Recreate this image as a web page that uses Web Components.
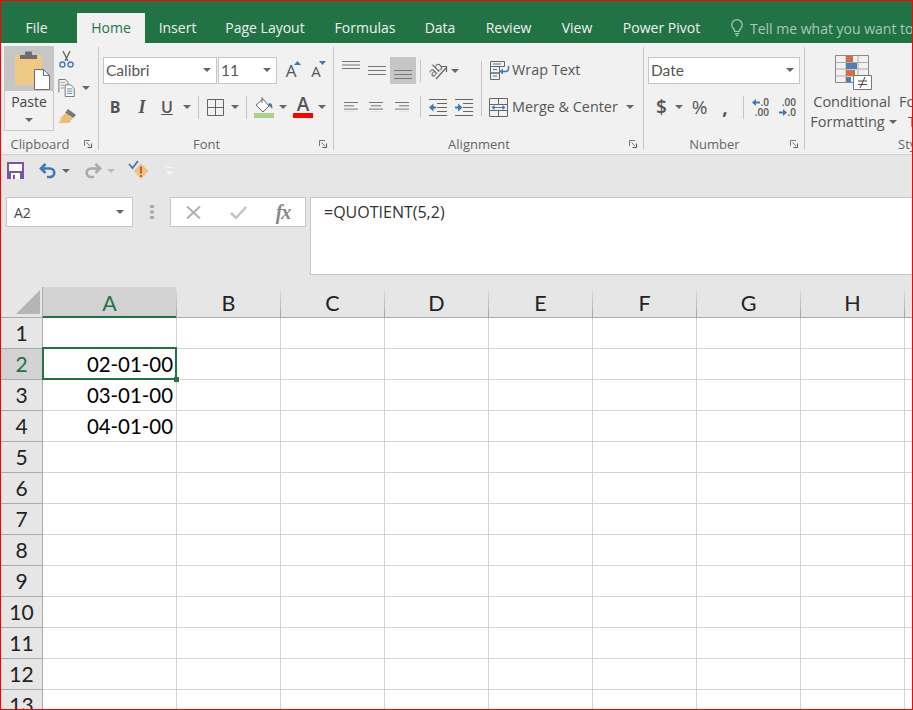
<!DOCTYPE html>
<html>
<head>
<meta charset="utf-8">
<title>Excel</title>
<style>
  html, body { margin: 0; padding: 0; background: #fff; }
</style>
</head>
<body>
<excel-app>
  <excel-tabs></excel-tabs>
  <excel-ribbon>
    <rb-group style="width:97px" label="Clipboard" launcher>
      <clipboard-tools></clipboard-tools>
    </rb-group>
    <rb-sep></rb-sep>
    <rb-group style="width:234px" label="Font" launcher>
      <font-tools></font-tools>
    </rb-group>
    <rb-sep></rb-sep>
    <rb-group style="width:309px" label="Alignment" launcher>
      <align-tools></align-tools>
    </rb-group>
    <rb-sep></rb-sep>
    <rb-group style="width:160px" label="Number" launcher>
      <number-tools></number-tools>
    </rb-group>
    <rb-sep></rb-sep>
    <rb-group style="width:107px" label="Sty" labelpad="93">
      <styles-tools></styles-tools>
    </rb-group>
  </excel-ribbon>
  <quick-bar></quick-bar>
  <formula-bar name="A2" value="=QUOTIENT(5,2)"></formula-bar>
  <excel-sheet></excel-sheet>
</excel-app>

<script>
const UI = '"Open Sans", "Noto Sans", sans-serif';
const CARET = `<svg width="8" height="4" viewBox="0 0 8 4"><path d="M0 0h8L4 4z" fill="#666"/></svg>`;

// Crea el shadow root de un elemento a partir de css y html
function fill(el, css, html) {
    const root = el.attachShadow({mode: 'open'});
    const template = document.createElement('template');
    template.innerHTML = `<style>${css}</style>${html}`;
    root.appendChild(template.content.cloneNode(true));
}

const CELL = `
    .row { display: flex; align-items: center; }
    .c { display: flex; align-items: center; justify-content: center; flex: none; height: 100%; box-sizing: border-box; }
    .vs { flex: none; width: 1px; background: #c6c6c6; }
    svg { display: block; flex: none; }
`;

class ExcelApp extends HTMLElement {
    constructor() {
        super();
        fill(this, `
            :host { display: flex; flex-direction: column; box-sizing: border-box; width: 913px; height: 710px;
                    border: 1px solid #f00; overflow: hidden; background: #e6e6e6; font-family: ${UI}; color: #444; }
        `, `<slot></slot>`);
    }
}

class ExcelTabs extends HTMLElement {
    constructor() {
        super();
        const tabs = [['Insert', 65], ['Page Layout', 110], ['Formulas', 90], ['Data', 60], ['Review', 77], ['View', 60], ['Power Pivot', 109]];
        fill(this, `
            :host { display: flex; flex: none; height: 42px; background: #217346; color: #f1f1f1;
                    font-size: 14px; align-items: flex-end; padding-left: 9px; box-sizing: border-box; white-space: nowrap; }
            .t { height: 30px; line-height: 29px; text-align: center; flex: none; }
            .file { width: 53px; margin-right: 14px; }
            .on { width: 68px; background: #f1f1f1; color: #217346; }
            .tell { color: #a9c9b6; display: flex; align-items: center; gap: 6px; padding-left: 14px; }
        `, `
            <div class="t file">File</div>
            <div class="t on">Home</div>
            ${tabs.map(t => `<div class="t" style="width:${t[1]}px">${t[0]}</div>`).join('')}
            <div class="t tell">
                <svg width="14" height="18" viewBox="0 0 16 20" fill="none" stroke="#a9c9b6" stroke-width="1.400">
                    <path d="M5.500 14c0-3-3.500-4-3.500-7.500a6 6 0 0 1 12 0C14 10 10.500 11 10.500 14z"/>
                    <path d="M5.500 16.500h5M6.500 18.800h3"/>
                </svg>
                <span>Tell me what you want to do</span>
            </div>
        `);
    }
}

class ExcelRibbon extends HTMLElement {
    constructor() {
        super();
        fill(this, `
            :host { display: flex; flex: none; height: 112px; box-sizing: border-box; padding-top: 3px;
                    background: #f1f1f1; border-bottom: 1px solid #d2d2d2; overflow: hidden; }
        `, `<slot></slot>`);
    }
}

class RbSep extends HTMLElement {
    constructor() {
        super();
        fill(this, `:host { display: block; flex: none; width: 1px; height: 103px; margin-top: 1px; background: #c6c6c6; }`, ``);
    }
}

class RbGroup extends HTMLElement {
    constructor() {
        super();
        const label = this.getAttribute('label');
        const pad = this.getAttribute('labelpad');
        const launcher = this.hasAttribute('launcher') ? `
            <svg class="launch" width="8" height="8" viewBox="0 0 8 8" fill="none" stroke="#777">
                <path d="M.5 6V.5H6"/><path d="M2.500 2.500l3.500 3.500" /><path d="M7.500 3.500v4h-4" stroke="#555"/>
            </svg>` : '';
        fill(this, `
            :host { display: flex; flex-direction: column; flex: none; height: 107px; position: relative; overflow: hidden; }
            .body { flex: 1; min-height: 0; }
            .label { flex: none; height: 17px; line-height: 16px; font-size: 13px; color: #666;
                     text-align: ${pad ? 'left' : 'center'}; padding: 0 ${pad ? 0 : 19}px 0 ${pad || 0}px; white-space: nowrap; }
            .launch { position: absolute; right: 6px; bottom: 5px; }
        `, `<div class="body"><slot></slot></div><div class="label">${label}</div>${launcher}`);
    }
}

class ClipboardTools extends HTMLElement {
    constructor() {
        super();
        fill(this, CELL + `
            :host { display: flex; padding-left: 3px; font-size: 14px; }
            .paste { width: 50px; height: 85px; box-sizing: border-box; display: flex; flex-direction: column;
                     border: 1px solid #c6c6c6; }
            .top { height: 44px; background: #c6c6c6; }
            .bot { flex: 1; display: flex; flex-direction: column; align-items: center; padding-top: 1px; line-height: 20px; }
            .bot svg { margin-top: 6px; }
            .side { display: flex; flex-direction: column; margin-left: 4px; padding-top: 5px; }
        `, `
            <div class="paste">
                <div class="top">
                    <svg width="48" height="44" viewBox="0 0 48 44">
                        <rect x="10" y="8" width="27" height="30" fill="#efc983"/>
                        <path d="M20 8V5.500a1 1 0 0 1 1-1h5a1 1 0 0 1 1 1V8h5v4H15V8z" fill="#6e6e6e"/>
                        <path d="M29.500 22.500h9l6 6v14h-15z" fill="#fff" stroke="#6e6e6e"/>
                        <path d="M38.500 22.500v6h6" fill="none" stroke="#6e6e6e"/>
                    </svg>
                </div>
                <div class="bot"><span>Paste</span>${CARET}</div>
            </div>
            <div class="side">
                <svg width="17" height="18" viewBox="0 0 18 20" fill="none">
                    <path d="M5 0l5.500 11M13 0L7.500 11" stroke="#666" stroke-width="1.500"/>
                    <circle cx="4.500" cy="15" r="2.800" stroke="#3f78b5" stroke-width="1.500"/>
                    <circle cx="13.500" cy="15" r="2.800" stroke="#3f78b5" stroke-width="1.500"/>
                </svg>
                <div class="row" style="margin-top:10px;gap:6px">
                    <svg width="18" height="18" viewBox="0 0 19 20" fill="none" stroke="#666">
                        <path d="M.5 15V.5h7l3 3V6"/><path d="M2.500 4h5M2.500 7h4M2.500 10h4" stroke="#999"/>
                        <path d="M7.500 6.500h6l4 4v9h-10z" fill="#fff"/>
                        <path d="M9.500 11h6M9.500 13.500h6M9.500 16h6" stroke="#3f78b5"/>
                    </svg>
                    ${CARET}
                </div>
                <svg style="margin-top:11px" width="19" height="17" viewBox="0 0 19 17">
                    <path d="M10 1l8 6-3 3-8-5z" fill="#777"/>
                    <path d="M8 5l7 5-4 5-11 0 3-2-2-1 3-1-2-1z" fill="#e8bd74"/>
                </svg>
            </div>
        `);
    }
}

class FontTools extends HTMLElement {
    constructor() {
        super();
        fill(this, CELL + `
            :host { display: block; padding: 11px 0 0 4px; font-size: 14px; }
            .row { height: 27px; }
            .row + .row { margin-top: 9px; height: 28px; }
            .sel { box-sizing: border-box; height: 27px; background: #fff; border: 1px solid #c6c6c6; display: flex;
                   align-items: center; justify-content: space-between; padding: 0 5px 1px 2px; color: #555; flex: none;
                   font-family: Lato, sans-serif; font-size: 15.500px; }
            .a { font-size: 17px; color: #555; position: relative; line-height: 20px; }
            .a svg { position: absolute; top: 0; left: 8px; }
            b, i, u { font-size: 16px; color: #555; }
            b { font-weight: 700; }
            i { font-family: "Liberation Serif", serif; font-weight: 700; font-size: 18px; }
            u { font-weight: 600; }
            .vs { height: 23px; }
            .colour { display: flex; flex-direction: column; align-items: center; }
            .colour span { font-size: 19px; font-weight: 600; line-height: 17px; color: #555; }
            .colour em { display: block; width: 20px; height: 5px; background: #f00; }
        `, `
            <div class="row">
                <div class="sel" style="width:114px"><span>Calibri</span>${CARET}</div>
                <div class="sel" style="width:59px;margin-left:1px"><span>11</span>${CARET}</div>
                <div class="c" style="width:28px">
                    <div class="a">A<svg width="7" height="4" viewBox="0 0 7 4"><path d="M3.500 0L7 4H0z" fill="#3f78b5"/></svg></div>
                </div>
                <div class="c" style="width:22px">
                    <div class="a" style="font-size:15px">A<svg width="7" height="4" viewBox="0 0 7 4"><path d="M0 0h7L3.500 4z" fill="#3f78b5"/></svg></div>
                </div>
            </div>
            <div class="row">
                <div class="c" style="width:24px"><b>B</b></div>
                <div class="c" style="width:30px"><i>I</i></div>
                <div class="c" style="width:20px"><u>U</u></div>
                <div class="c" style="width:20px">${CARET}</div>
                <div class="c" style="width:1px"></div>
                <div class="vs"></div>
                <div class="c" style="width:33px">
                    <svg width="17" height="17" viewBox="0 0 17 17" fill="none" stroke="#666"><path d="M.5.500h16v16H.500zM8.500.500v16M.500 8.500h16"/></svg>
                </div>
                <div class="c" style="width:6px">${CARET}</div>
                <div class="c" style="width:8px"></div>
                <div class="vs"></div>
                <div class="c" style="width:34px">
                    <svg width="20" height="22" viewBox="0 0 20 22">
                        <path d="M2 9l7-6 6 7-6 6z" fill="#fff" stroke="#666"/>
                        <path d="M8 1v6" stroke="#666" fill="none"/>
                        <path d="M15 7c3 0 4 3 3 6-1-2-2-3-4-3z" fill="#3f78b5"/>
                        <rect y="17" width="20" height="5" fill="#a9d08e"/>
                    </svg>
                </div>
                <div class="c" style="width:4px">${CARET}</div>
                <div class="c" style="width:36px"><div class="colour"><span>A</span><em></em></div></div>
                <div class="c" style="width:2px">${CARET}</div>
            </div>
        `);
    }
}

function lines(widths, gap, color) {
    return widths.map((w, i) => {
        const x = w.x === undefined ? 0 : w.x;
        return `<path d="M${x} ${i * gap + .5}h${w.w}" stroke="${color || '#777'}"/>`;
    }).join('');
}

class AlignTools extends HTMLElement {
    constructor() {
        super();
        const bars = (w) => [{w}, {w}, {w}];
        const icon = (rows, w, gap) => `<svg width="${w}" height="${(rows.length - 1) * gap + 1}">${lines(rows, gap)}</svg>`;
        const left = [{w: 14}, {w: 10}, {w: 14}, {w: 10}];
        const center = [{w: 14}, {x: 2, w: 10}, {w: 14}, {x: 2, w: 10}];
        const right = [{w: 14}, {x: 4, w: 10}, {w: 14}, {x: 4, w: 10}];
        fill(this, CELL + `
            :host { display: block; padding: 11px 0 0 0; font-size: 14.400px; white-space: nowrap; }
            .row { height: 27px; }
            .row + .row { margin-top: 9px; height: 28px; }
            .sel { background: #c6c6c6; }
            .wt { margin-left: 3px; color: #555; padding-bottom: 2px; }
            .vs.s { height: 22px; }
            .vb { height: 55px; align-self: flex-start; margin-top: 4px; }
            .tp { align-items: flex-start; }
        `, `
            <div class="row">
                <div class="c" style="width:7px"></div>
                <div class="c tp" style="width:20px;padding-top:4px">${icon(bars(18), 18, 3.500)}</div>
                <div class="c tp" style="width:29px;padding-top:9px;justify-content:flex-end;padding-right:4px">${icon(bars(18), 18, 4)}</div>
                <div class="c tp sel" style="width:26px;padding-top:13px">${icon(bars(18), 18, 4)}</div>
                <div class="c" style="width:4px"></div>
                <div class="vs s"></div>
                <div class="c" style="width:30px;padding-left:4px">
                    <svg width="20" height="19" viewBox="0 0 20 19" fill="none" stroke="#666">
                        <text x="0" y="13" font-size="13" fill="#666" stroke="none" font-family="Open Sans" transform="rotate(-45 7 9)">ab</text>
                        <path d="M8 18L18 7M13 5.500H18.500V11" stroke-width="1.200"/>
                    </svg>
                </div>
                <div class="c" style="width:8px">${CARET}</div>
                <div class="c" style="width:22px"></div>
                <div class="vs vb"></div>
                <div class="c" style="width:8px"></div>
                <svg width="20" height="19" viewBox="0 0 20 19" fill="none">
                    <path d="M.5.500h14v5H.500zM.500 5.500h9v6.500h-9zM.500 12h9v6.500h-9z" stroke="#666"/>
                    <path d="M3 3h8M3 8.500h4M3 15h4" stroke="#3f78b5"/>
                    <path d="M18.500 5v2.500a3 3 0 0 1-3 3H11" stroke="#3f78b5" stroke-width="1.500"/>
                    <path d="M13 7.500v6L9.500 10.500z" fill="#3f78b5"/>
                </svg>
                <span class="wt" style="margin-left:2px">Wrap Text</span>
            </div>
            <div class="row">
                <div class="c" style="width:4px"></div>
                <div class="c" style="width:25px">${icon(left, 14, 3.300)}</div>
                <div class="c" style="width:25px">${icon(center, 14, 3.300)}</div>
                <div class="c" style="width:27px">${icon(right, 14, 3.300)}</div>
                <div class="c" style="width:5px"></div>
                <div class="vs s"></div>
                <div class="c" style="width:8px"></div>
                <svg width="18" height="17" viewBox="0 0 18 17" fill="none">
                    <path d="M0 .5h18M8 4.500h10M8 8.500h10M8 12.500h10M0 16.500h18" stroke="#666"/>
                    <path d="M7 8.500H2" stroke="#3f78b5" stroke-width="2"/><path d="M4.500 4.500v8L0 8.500z" fill="#3f78b5"/>
                </svg>
                <div class="c" style="width:8px"></div>
                <svg width="18" height="17" viewBox="0 0 18 17" fill="none">
                    <path d="M0 .5h18M8 4.500h10M8 8.500h10M8 12.500h10M0 16.500h18" stroke="#666"/>
                    <path d="M0 8.500h5" stroke="#3f78b5" stroke-width="2"/><path d="M3 4.500v8L7.500 8.500z" fill="#3f78b5"/>
                </svg>
                <div class="c" style="width:16px"></div>
                <svg width="19" height="19" viewBox="0 0 19 19" fill="none">
                    <path d="M.5.500h18v18H.500zM.500 6.500h18M.500 12.500h18M9.500.500v6M9.500 12.500v6" stroke="#666"/>
                    <path d="M4 9.500h11" stroke="#3f78b5"/><path d="M5.500 7v5L2.500 9.500zM13.500 7v5l3-2.500z" fill="#3f78b5"/>
                </svg>
                <span class="wt" style="margin-left:4px">Merge &amp; Center</span>
                <div class="c" style="width:25px">${CARET}</div>
            </div>
        `);
    }
}

class NumberTools extends HTMLElement {
    constructor() {
        super();
        const left = `<svg width="8" height="7" viewBox="0 0 8 7"><path d="M8 3.500H3" stroke="#3f78b5" stroke-width="2"/><path d="M4 0v7L0 3.500z" fill="#3f78b5"/></svg>`;
        const right = `<svg width="8" height="7" viewBox="0 0 8 7"><path d="M0 3.500h5" stroke="#3f78b5" stroke-width="2"/><path d="M4 0v7l4-3.500z" fill="#3f78b5"/></svg>`;
        fill(this, CELL + `
            :host { display: block; padding: 11px 0 0 4px; font-size: 14.500px; }
            .row { height: 27px; }
            .row + .row { margin-top: 9px; height: 28px; }
            .sel { box-sizing: border-box; width: 152px; height: 27px; background: #fff; border: 1px solid #c6c6c6; display: flex;
                   align-items: center; justify-content: space-between; padding: 0 5px 1px 2px; color: #555; font-family: Lato, sans-serif; font-size: 15.500px; }
            .big { font-size: 19px; color: #555; font-weight: 600; }
            .tiny { width: 17px; font-size: 10px; line-height: 10px; color: #555; font-weight: 600; }
            .tiny div { display: flex; align-items: center; justify-content: flex-end; height: 10px; gap: 1px; }
            .vs { height: 23px; }
        `, `
            <div class="row"><div class="sel"><span>Date</span>${CARET}</div></div>
            <div class="row">
                <div class="c" style="width:5px"></div>
                <div class="c" style="width:17px"><span class="big">$</span></div>
                <div class="c" style="width:17px">${CARET}</div>
                <div class="c" style="width:25px"><span class="big" style="font-weight:400">%</span></div>
                <div class="c" style="width:26px"><span class="big" style="font-weight:700">,</span></div>
                <div class="c" style="width:5px"></div>
                <div class="vs"></div>
                <div class="c" style="width:8px"></div>
                <div class="tiny"><div>${left}<span>.0</span></div><div><span>.00</span></div></div>
                <div class="c" style="width:10px"></div>
                <div class="tiny"><div><span>.00</span></div><div>${right}<span>.0</span></div></div>
            </div>
        `);
    }
}

class StylesTools extends HTMLElement {
    constructor() {
        super();
        fill(this, CELL + `
            :host { display: flex; font-size: 14.500px; white-space: nowrap; }
            .cf { width: 94px; flex: none; display: flex; flex-direction: column; align-items: center; padding-top: 9px; }
            .cf > svg { margin-left: 3px; }
            .txt { text-align: center; line-height: 20px; margin-top: 2px; color: #555; }
            .next { padding-top: 46px; line-height: 20px; color: #555; text-align: left; }
            .next span { padding-left: 9px; }
            .fm { display: flex; align-items: center; gap: 4px; padding-left: 3px; }
        `, `
            <div class="cf">
                <svg width="37" height="35" viewBox="0 0 37 35" fill="none">
                    <path d="M.5.500h33v27h-33z" stroke="#888"/>
                    <path d="M.5 7.500h33M.5 14h33M.5 21h33M11 .500v27M23 .500v27" stroke="#aaa"/>
                    <rect x="11" y="1" width="7" height="6" fill="#db6b41"/>
                    <rect x="11" y="8" width="11" height="6" fill="#4a7fb8"/>
                    <rect x="11" y="15" width="9" height="6" fill="#db6b41"/>
                    <rect x="11" y="22" width="5" height="5" fill="#4a7fb8"/>
                    <path d="M18.500 20.500h18v14h-18z" fill="#fff" stroke="#777"/>
                    <path d="M23 26h9M23 29.500h9M25 33l5-11" stroke="#444"/>
                </svg>
                <div class="txt">Conditional<div class="fm">Formatting ${CARET}</div></div>
            </div>
            <div class="next">Fo<br><span>T</span></div>
        `);
    }
}

class QuickBar extends HTMLElement {
    constructor() {
        super();
        fill(this, CELL + `
            :host { display: flex; flex: none; height: 31px; align-items: center; padding-left: 6px; box-sizing: border-box; }
        `, `
            <svg width="17" height="17" viewBox="0 0 17 17"><path d="M0 0h17v17H0z" fill="#7f52a4"/><rect x="2" y="2" width="13" height="7" fill="#fff"/><rect x="4" y="11" width="9" height="6" fill="#fff"/><rect x="6" y="13" width="2" height="4" fill="#7f52a4"/></svg>
            <div class="c" style="width:15px"></div>
            <svg width="18" height="16" viewBox="0 0 18 16" fill="none" stroke="#3f78b5" stroke-width="2.600">
                <path d="M6.500 1L2 5.500 6.500 10"/><path d="M2.500 5.500H11a4.200 4.200 0 0 1 0 8.500H8"/>
            </svg>
            <div class="c" style="width:5px"></div>${CARET}
            <div class="c" style="width:14px"></div>
            <svg width="18" height="16" viewBox="0 0 18 16" fill="none" stroke="#aaa" stroke-width="2.600">
                <path d="M11.500 1L16 5.500 11.500 10"/><path d="M15.500 5.500H7a4.200 4.200 0 0 0 0 8.500h3"/>
            </svg>
            <div class="c" style="width:5px"></div>
            <svg width="8" height="4" viewBox="0 0 8 4"><path d="M0 0h8L4 4z" fill="#bbb"/></svg>
            <div class="c" style="width:13px"></div>
            <svg width="21" height="21" viewBox="0 0 21 21" fill="none">
                <path d="M13 4.500l6.500 6.500-6.500 7-6.500-7z" fill="#edc47f" stroke="#edc47f" stroke-width="1.500" stroke-linejoin="round"/>
                <path d="M1 4l3.500 4L10 1" stroke="#3f78b5" stroke-width="1.800"/>
                <path d="M13 6.500v7M13 15v2" stroke="#d8432f" stroke-width="1.800"/>
            </svg>
            <div class="c" style="width:17px"></div>
            <svg width="7" height="8" viewBox="0 0 7 8"><path d="M0 0h7v1H0zM0 4h7L3.500 8z" fill="#f5f5f5"/></svg>
        `);
    }
}

class FormulaBar extends HTMLElement {
    constructor() {
        super();
        fill(this, CELL + `
            :host { display: flex; flex: none; height: 101px; box-sizing: border-box; padding: 11px 0 12px 5px; align-items: flex-start; }
            .box { box-sizing: border-box; height: 30px; background: #fff; border: 1px solid #c6c6c6; display: flex; align-items: center; flex: none; }
            .name { width: 127px; justify-content: space-between; padding: 0 8px 0 7px; font-size: 14px; color: #444; }
            .grip { width: 37px; flex: none; height: 30px; display: flex; align-items: center; justify-content: center; }
            .btns { width: 136px; }
            .fx { font-family: "Liberation Serif", serif; font-style: italic; font-weight: 700; font-size: 20px; color: #888; letter-spacing: -1px; }
            .input { flex: 1; align-self: stretch; height: 78px; margin-left: 4px; background: #fff; border: 1px solid #c6c6c6; border-right: 0;
                     box-sizing: border-box; padding: 4px 0 0 13px; font-size: 16px; color: #333; line-height: 20px; }
        `, `
            <div class="box name"><span>${this.getAttribute('name')}</span>${CARET}</div>
            <div class="grip"><svg width="4" height="14"><path d="M0 0h4v3H0zM0 5.500h4v3H0zM0 11h4v3H0z" fill="#aaa"/></svg></div>
            <div class="box btns">
                <div class="c" style="width:44px"><svg width="15" height="13" viewBox="0 0 15 13"><path d="M1 .5l13 12M14 .500L1 12.500" stroke="#b0b0b0" stroke-width="2"/></svg></div>
                <div class="c" style="width:46px"><svg width="17" height="13" viewBox="0 0 17 13" fill="none"><path d="M1 7l5 5L16 1" stroke="#c4c4c4" stroke-width="2.500"/></svg></div>
                <div class="c" style="width:44px"><span class="fx">fx</span></div>
            </div>
            <div class="input">${this.getAttribute('value')}</div>
        `);
    }
}

class ExcelSheet extends HTMLElement {
    constructor() {
        super();
        const cols = 'ABCDEFGHI'.split('');
        const data = {2: '02-01-00', 3: '03-01-00', 4: '04-01-00'};
        let cells = `<div class="corner"><svg width="24" height="24"><path d="M24 0v24H0z" fill="#b5b5b5"/></svg></div>`;
        cols.forEach(c => { cells += `<div class="ch ${c === 'A' ? 'cs' : ''}">${c}</div>`; });
        for (let r = 1; r <= 13; r++) {
            cells += `<div class="rh ${r === 2 ? 'rs' : ''}">${r}</div>`;
            cols.forEach(c => {
                const v = c === 'A' && data[r] ? data[r] : '';
                cells += `<div class="cell ${c === 'A' && r === 2 ? 'active' : ''}">${v}</div>`;
            });
        }
        fill(this, `
            :host { display: block; flex: 1; min-height: 0; overflow: hidden; background: #fff; font-family: Lato, sans-serif; }
            .grid { display: grid; grid-template-columns: 42px 134px repeat(7, 104px) 40px; grid-auto-rows: 31px; width: 1000px; }
            .corner { background: #e6e6e6; border-bottom: 1px solid #ababab; border-right: 1px solid #ababab; box-sizing: border-box; display: flex; align-items: flex-end; justify-content: flex-end; padding: 0 2px 3px 0; }
            .ch { box-sizing: border-box; background: #e6e6e6; border-right: 1px solid;
                  border-image: linear-gradient(#e6e6e6, #a0a0a0) 1; box-shadow: inset 0 -1px 0 #ababab;
                  text-align: center; font-size: 21.500px; line-height: 33px; color: #222; }
            .cs { background: #d2d2d2; box-shadow: inset 0 -2px 0 #217346; color: #217346; }
            .rh { box-sizing: border-box; background: #e6e6e6; border-bottom: 1px solid #ababab; border-right: 1px solid #ababab;
                  text-align: center; font-size: 21px; line-height: 30px; color: #222; }
            .rs { background: #d2d2d2; color: #217346; }
            .cell { box-sizing: border-box; border-right: 1px solid #d4d4d4; border-bottom: 1px solid #d4d4d4; text-align: right;
                    font-size: 20.400px; line-height: 31px; padding-right: 3px; color: #000; position: relative; }
            .active::after { content: ''; position: absolute; left: -1px; top: -2px; right: -1px; bottom: -1px; border: 2px solid #217346; }
            .active::before { content: ''; position: absolute; right: -3px; bottom: -3px; width: 5px; height: 5px; background: #217346; z-index: 1; }
        `, `<div class="grid">${cells}</div>`);
    }
}

customElements.define('excel-app', ExcelApp);
customElements.define('excel-tabs', ExcelTabs);
customElements.define('excel-ribbon', ExcelRibbon);
customElements.define('rb-sep', RbSep);
customElements.define('rb-group', RbGroup);
customElements.define('clipboard-tools', ClipboardTools);
customElements.define('font-tools', FontTools);
customElements.define('align-tools', AlignTools);
customElements.define('number-tools', NumberTools);
customElements.define('styles-tools', StylesTools);
customElements.define('quick-bar', QuickBar);
customElements.define('formula-bar', FormulaBar);
customElements.define('excel-sheet', ExcelSheet);
</script>
</body>
</html>
